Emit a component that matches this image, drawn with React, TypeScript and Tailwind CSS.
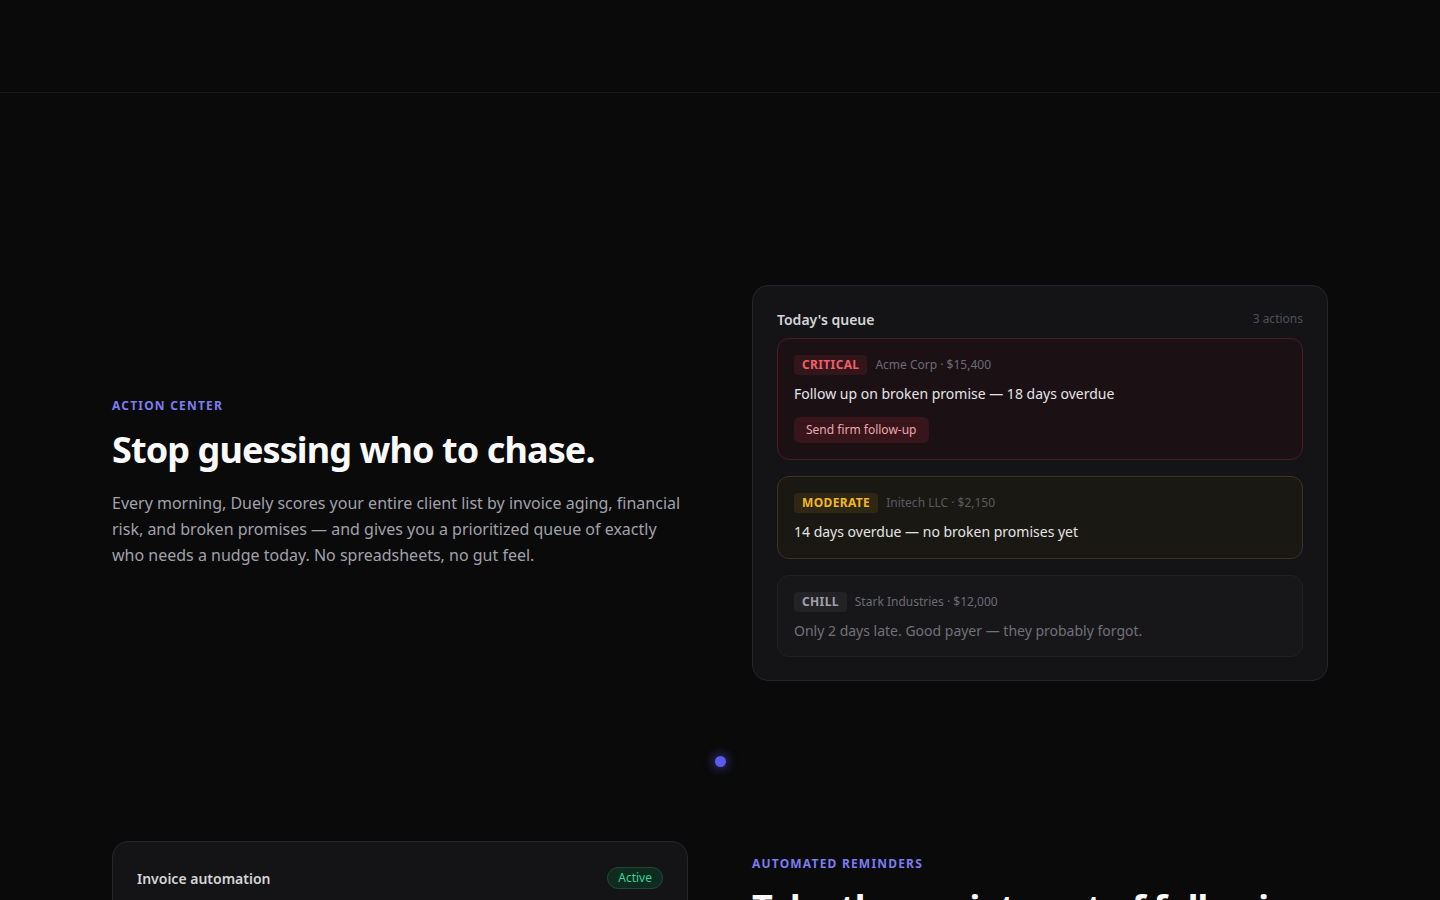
import React from "react";

type QueueItem = {
  level: string;
  meta: string;
  text: string;
  action?: string;
  box: string;
  badge: string;
  metaColor: string;
  textColor: string;
};

const queue: QueueItem[] = [
  {
    level: "CRITICAL",
    meta: "Acme Corp · $15,400",
    text: "Follow up on broken promise — 18 days overdue",
    action: "Send firm follow-up",
    box: "border-[#4a1c24] bg-[#1b1115] pb-4",
    badge: "bg-[#33161a] text-[#ee5f68]",
    metaColor: "text-[#6b6b73]",
    textColor: "text-[#e4e4e7]",
  },
  {
    level: "MODERATE",
    meta: "Initech LLC · $2,150",
    text: "14 days overdue — no broken promises yet",
    box: "border-[#3a3320] bg-[#1a1813] pb-4",
    badge: "bg-[#2e2714] text-[#f2b823]",
    metaColor: "text-[#5a5a60]",
    textColor: "text-[#e4e4e7]",
  },
  {
    level: "CHILL",
    meta: "Stark Industries · $12,000",
    text: "Only 2 days late. Good payer — they probably forgot.",
    box: "border-[#202023] bg-[#171719] pb-[15px]",
    badge: "bg-[#232326] text-[#a1a1aa]",
    metaColor: "text-[#6b6b73]",
    textColor: "text-[#717178]",
  },
];

function QueueCard() {
  return (
    <div className="rounded-2xl border border-[#26262a] bg-[#141416] px-6 pt-[23px] pb-[23px]">
      <div className="flex items-center justify-between h-[20px] mb-[9px]">
        <span className="text-[14px] font-semibold text-[#d4d4d8]">Today's queue</span>
        <span className="text-[12px] text-[#4f4f56]">3 actions</span>
      </div>
      <div className="flex flex-col gap-4">
        {queue.map((q) => (
          <div key={q.level} className={`rounded-xl border px-4 pt-4 ${q.box}`}>
            <div className="flex items-center gap-2 h-[20px]">
              <span className={`rounded px-2 h-[20px] flex items-center text-[12px] font-bold tracking-[0.03em] ${q.badge}`}>
                {q.level}
              </span>
              <span className={`text-[12px] ${q.metaColor}`}>{q.meta}</span>
            </div>
            <p className={`mt-[9px] text-[14px] leading-[20px] ${q.textColor}`}>{q.text}</p>
            {q.action && (
              <button className="mt-[13px] h-[26px] rounded-md bg-[#37151a] px-3 text-[12px] text-[#eca8ae]">
                {q.action}
              </button>
            )}
          </div>
        ))}
      </div>
    </div>
  );
}

function AutomationCard() {
  return (
    <div className="rounded-2xl border border-[#26262a] bg-[#141416] px-6 pt-[25px] h-[200px]">
      <div className="flex items-center justify-between">
        <span className="text-[14px] font-semibold text-[#d4d4d8]">Invoice automation</span>
        <span className="rounded-full border border-[#1d4a35] bg-[#0f2a1f] px-[10px] h-[22px] flex items-center text-[12px] text-[#34d399]">
          Active
        </span>
      </div>
    </div>
  );
}

export default function App() {
  return (
    <div
      className="min-h-screen bg-[#0a0a0a] text-white"
      style={{ fontFamily: '"Noto Sans", "Open Sans", sans-serif' }}
    >
      <header className="h-[93px] border-b border-[#171717]" />

      <main className="mx-auto max-w-[1216px] pt-[192px]">
        <section className="grid grid-cols-2 gap-16 items-center">
          <div className="pb-[1px]">
            <p className="text-[12px] font-bold tracking-[0.1em] text-[#7c7cf0]">ACTION CENTER</p>
            <h2 className="mt-[13px] text-[36px] leading-[44px] font-bold tracking-[-0.025em] text-[#fafafa]">
              Stop guessing who to chase.
            </h2>
            <p className="mt-[18px] text-[16px] leading-[26px] text-[#a1a1aa]">
              Every morning, Duely scores your entire client list by invoice aging, financial risk, and broken
              promises — and gives you a prioritized queue of exactly who needs a nudge today. No spreadsheets,
              no gut feel.
            </p>
          </div>
          <QueueCard />
        </section>

        <div className="flex h-[160px] items-center justify-center">
          <span className="h-[11px] w-[11px] rounded-full bg-[#5b5bf0] shadow-[0_0_10px_3px_rgba(91,91,240,0.35)]" />
        </div>

        <section className="grid grid-cols-2 gap-16 items-start">
          <AutomationCard />
          <div className="pt-[14px]">
            <p className="text-[12px] font-bold tracking-[0.1em] text-[#7c7cf0]">AUTOMATED REMINDERS</p>
            <h2 className="mt-[13px] text-[36px] leading-[44px] font-bold tracking-[-0.025em] text-[#fafafa]">
              Take the anxiety out of following up.
            </h2>
          </div>
        </section>
      </main>
    </div>
  );
}
